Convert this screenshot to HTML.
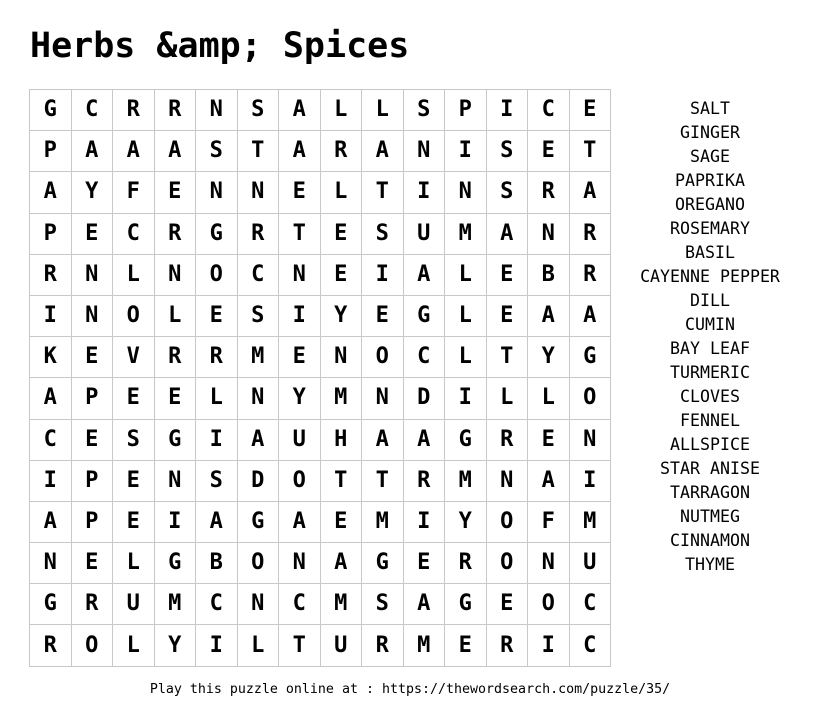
<!DOCTYPE html>
<html><head><meta charset="utf-8"><style>
body{margin:0;width:820px;height:720px;background:#fff;font-family:"DejaVu Sans Mono","Liberation Mono",monospace;color:#000;position:relative;overflow:hidden}
h1{position:absolute;left:30px;top:23px;margin:0;font-size:35px;font-weight:bold;line-height:46px}
table{position:absolute;left:29px;top:89px;border-collapse:collapse;width:582px;table-layout:fixed}
tr{height:41.2px}
td{border:1px solid #c8c8c8;text-align:center;vertical-align:middle;font-weight:bold;font-size:22px;padding:0;line-height:20px}
.words{position:absolute;left:610px;width:200px;top:97px;text-align:center;font-size:16.6px;line-height:24px}
.foot{position:absolute;left:0;width:820px;top:682px;text-align:center;font-size:13.3px}
</style></head><body>
<h1>Herbs &amp;amp; Spices</h1>
<table>
<tr><td>G</td><td>C</td><td>R</td><td>R</td><td>N</td><td>S</td><td>A</td><td>L</td><td>L</td><td>S</td><td>P</td><td>I</td><td>C</td><td>E</td></tr>
<tr><td>P</td><td>A</td><td>A</td><td>A</td><td>S</td><td>T</td><td>A</td><td>R</td><td>A</td><td>N</td><td>I</td><td>S</td><td>E</td><td>T</td></tr>
<tr><td>A</td><td>Y</td><td>F</td><td>E</td><td>N</td><td>N</td><td>E</td><td>L</td><td>T</td><td>I</td><td>N</td><td>S</td><td>R</td><td>A</td></tr>
<tr><td>P</td><td>E</td><td>C</td><td>R</td><td>G</td><td>R</td><td>T</td><td>E</td><td>S</td><td>U</td><td>M</td><td>A</td><td>N</td><td>R</td></tr>
<tr><td>R</td><td>N</td><td>L</td><td>N</td><td>O</td><td>C</td><td>N</td><td>E</td><td>I</td><td>A</td><td>L</td><td>E</td><td>B</td><td>R</td></tr>
<tr><td>I</td><td>N</td><td>O</td><td>L</td><td>E</td><td>S</td><td>I</td><td>Y</td><td>E</td><td>G</td><td>L</td><td>E</td><td>A</td><td>A</td></tr>
<tr><td>K</td><td>E</td><td>V</td><td>R</td><td>R</td><td>M</td><td>E</td><td>N</td><td>O</td><td>C</td><td>L</td><td>T</td><td>Y</td><td>G</td></tr>
<tr><td>A</td><td>P</td><td>E</td><td>E</td><td>L</td><td>N</td><td>Y</td><td>M</td><td>N</td><td>D</td><td>I</td><td>L</td><td>L</td><td>O</td></tr>
<tr><td>C</td><td>E</td><td>S</td><td>G</td><td>I</td><td>A</td><td>U</td><td>H</td><td>A</td><td>A</td><td>G</td><td>R</td><td>E</td><td>N</td></tr>
<tr><td>I</td><td>P</td><td>E</td><td>N</td><td>S</td><td>D</td><td>O</td><td>T</td><td>T</td><td>R</td><td>M</td><td>N</td><td>A</td><td>I</td></tr>
<tr><td>A</td><td>P</td><td>E</td><td>I</td><td>A</td><td>G</td><td>A</td><td>E</td><td>M</td><td>I</td><td>Y</td><td>O</td><td>F</td><td>M</td></tr>
<tr><td>N</td><td>E</td><td>L</td><td>G</td><td>B</td><td>O</td><td>N</td><td>A</td><td>G</td><td>E</td><td>R</td><td>O</td><td>N</td><td>U</td></tr>
<tr><td>G</td><td>R</td><td>U</td><td>M</td><td>C</td><td>N</td><td>C</td><td>M</td><td>S</td><td>A</td><td>G</td><td>E</td><td>O</td><td>C</td></tr>
<tr><td>R</td><td>O</td><td>L</td><td>Y</td><td>I</td><td>L</td><td>T</td><td>U</td><td>R</td><td>M</td><td>E</td><td>R</td><td>I</td><td>C</td></tr>
</table>
<div class="words">SALT<br>GINGER<br>SAGE<br>PAPRIKA<br>OREGANO<br>ROSEMARY<br>BASIL<br>CAYENNE PEPPER<br>DILL<br>CUMIN<br>BAY LEAF<br>TURMERIC<br>CLOVES<br>FENNEL<br>ALLSPICE<br>STAR ANISE<br>TARRAGON<br>NUTMEG<br>CINNAMON<br>THYME</div>
<div class="foot">Play this puzzle online at : https://thewordsearch.com/puzzle/35/</div>
</body></html>
